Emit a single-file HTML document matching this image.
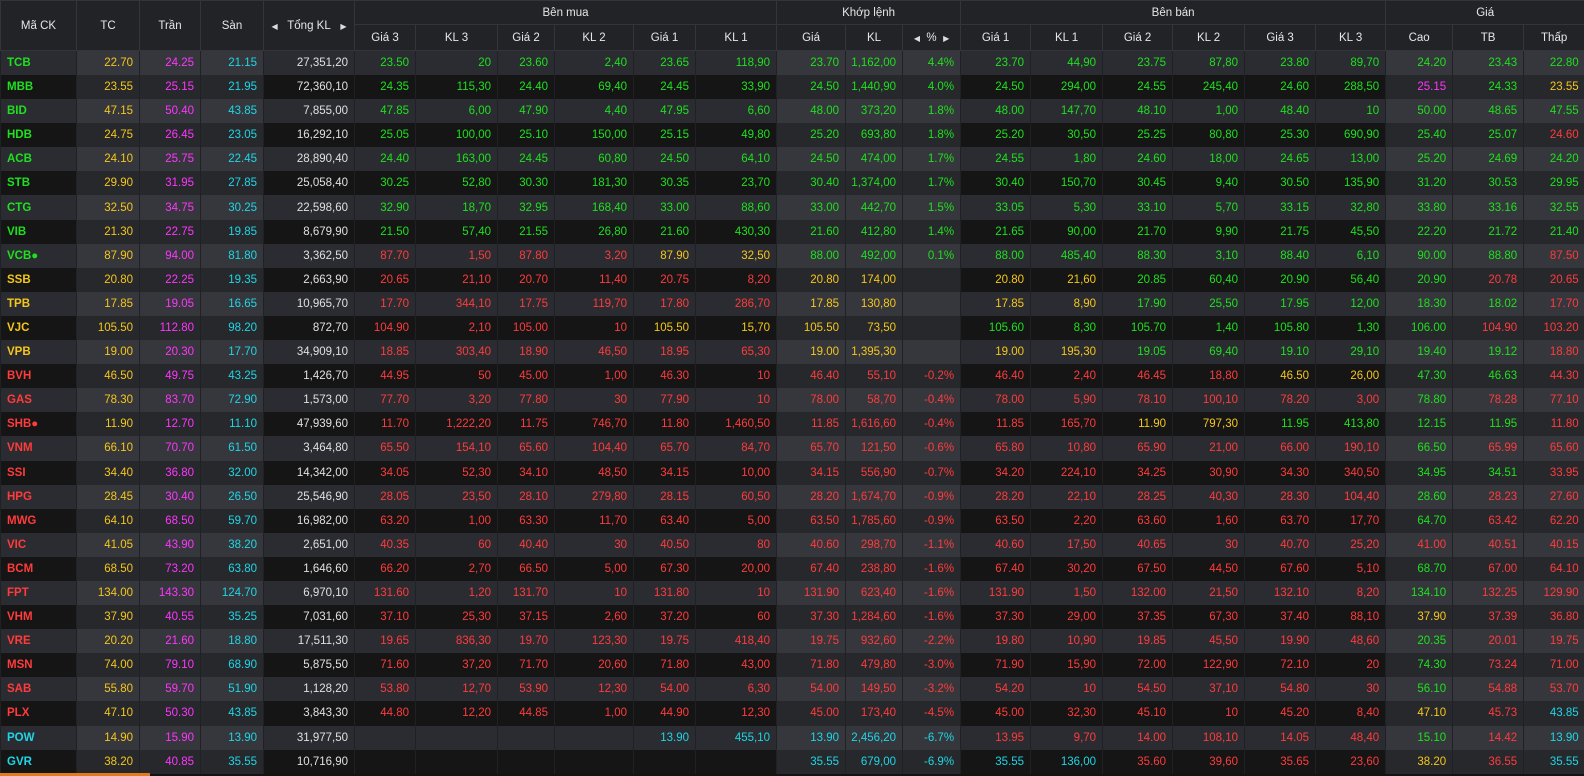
<!DOCTYPE html>
<html><head><meta charset="utf-8"><style>
html,body{margin:0;padding:0;background:#131313;width:1584px;height:776px;overflow:hidden}
table{border-collapse:collapse;table-layout:fixed;width:1584px;font-family:"Liberation Sans","DejaVu Sans",sans-serif;font-size:11.5px}
th{background:#222327;color:#e6e6e6;font-weight:normal;border:1px solid #34353a;font-size:11.5px;padding:0}
thead tr:first-child th{height:23px}
thead tr:nth-child(2) th{height:25px}
tbody tr{height:24.1px}
td{height:24.1px;line-height:24px;padding:0 6px 0 0;text-align:right;border-left:1px solid #202125;white-space:nowrap;overflow:hidden;box-sizing:border-box}
tbody tr:nth-child(odd) td{background:#2b2c31}
tbody tr:nth-child(even) td{background:#151515}
tbody tr:nth-child(odd) td.h{background:#36373c}
tbody tr:nth-child(even) td.h{background:#27282c}
td.t{text-align:left;padding-left:6px;font-weight:bold}
.g{color:#1ee01e}.r{color:#ff3b3b}.y{color:#f5c61c}.p{color:#ff35ff}.c{color:#1ed6e6}.w{color:#e0e0e0}
.ar{font-size:8px;color:#ddd}
#bar{position:absolute;left:0;top:773px;width:150px;height:3px;background:#e07b20}
</style></head><body>
<table id="tb">
<colgroup><col style="width:76px"><col style="width:63px"><col style="width:61px"><col style="width:63px"><col style="width:91px"><col style="width:61px"><col style="width:82px"><col style="width:57px"><col style="width:79px"><col style="width:62px"><col style="width:81px"><col style="width:69px"><col style="width:57px"><col style="width:58px"><col style="width:70px"><col style="width:72px"><col style="width:70px"><col style="width:72px"><col style="width:71px"><col style="width:70px"><col style="width:67px"><col style="width:71px"><col style="width:61px"></colgroup>
<thead>
<tr><th rowspan="2">Mã CK</th><th rowspan="2">TC</th><th rowspan="2">Trần</th><th rowspan="2">Sàn</th><th rowspan="2"><span class="ar">◀</span>&nbsp;&nbsp;&nbsp;Tổng KL&nbsp;&nbsp;&nbsp;<span class="ar">▶</span></th><th colspan="6">Bên mua</th><th colspan="3">Khớp lệnh</th><th colspan="6">Bên bán</th><th colspan="3">Giá</th></tr>
<tr><th>Giá 3</th><th>KL 3</th><th>Giá 2</th><th>KL 2</th><th>Giá 1</th><th>KL 1</th><th>Giá</th><th>KL</th><th><span class="ar">◀</span>&nbsp;&nbsp;%&nbsp;&nbsp;<span class="ar">▶</span></th><th>Giá 1</th><th>KL 1</th><th>Giá 2</th><th>KL 2</th><th>Giá 3</th><th>KL 3</th><th>Cao</th><th>TB</th><th>Thấp</th></tr>
</thead>
<tbody>
<tr><td>TCB</td><td>22.70</td><td>24.25</td><td>21.15</td><td>27,351,20</td><td>23.50</td><td>20</td><td>23.60</td><td>2,40</td><td>23.65</td><td>118,90</td><td>23.70</td><td>1,162,00</td><td>4.4%</td><td>23.70</td><td>44,90</td><td>23.75</td><td>87,80</td><td>23.80</td><td>89,70</td><td>24.20</td><td>23.43</td><td>22.80</td></tr>
<tr><td>MBB</td><td>23.55</td><td>25.15</td><td>21.95</td><td>72,360,10</td><td>24.35</td><td>115,30</td><td>24.40</td><td>69,40</td><td>24.45</td><td>33,90</td><td>24.50</td><td>1,440,90</td><td>4.0%</td><td>24.50</td><td>294,00</td><td>24.55</td><td>245,40</td><td>24.60</td><td>288,50</td><td>25.15</td><td>24.33</td><td>23.55</td></tr>
<tr><td>BID</td><td>47.15</td><td>50.40</td><td>43.85</td><td>7,855,00</td><td>47.85</td><td>6,00</td><td>47.90</td><td>4,40</td><td>47.95</td><td>6,60</td><td>48.00</td><td>373,20</td><td>1.8%</td><td>48.00</td><td>147,70</td><td>48.10</td><td>1,00</td><td>48.40</td><td>10</td><td>50.00</td><td>48.65</td><td>47.55</td></tr>
<tr><td>HDB</td><td>24.75</td><td>26.45</td><td>23.05</td><td>16,292,10</td><td>25.05</td><td>100,00</td><td>25.10</td><td>150,00</td><td>25.15</td><td>49,80</td><td>25.20</td><td>693,80</td><td>1.8%</td><td>25.20</td><td>30,50</td><td>25.25</td><td>80,80</td><td>25.30</td><td>690,90</td><td>25.40</td><td>25.07</td><td>24.60</td></tr>
<tr><td>ACB</td><td>24.10</td><td>25.75</td><td>22.45</td><td>28,890,40</td><td>24.40</td><td>163,00</td><td>24.45</td><td>60,80</td><td>24.50</td><td>64,10</td><td>24.50</td><td>474,00</td><td>1.7%</td><td>24.55</td><td>1,80</td><td>24.60</td><td>18,00</td><td>24.65</td><td>13,00</td><td>25.20</td><td>24.69</td><td>24.20</td></tr>
<tr><td>STB</td><td>29.90</td><td>31.95</td><td>27.85</td><td>25,058,40</td><td>30.25</td><td>52,80</td><td>30.30</td><td>181,30</td><td>30.35</td><td>23,70</td><td>30.40</td><td>1,374,00</td><td>1.7%</td><td>30.40</td><td>150,70</td><td>30.45</td><td>9,40</td><td>30.50</td><td>135,90</td><td>31.20</td><td>30.53</td><td>29.95</td></tr>
<tr><td>CTG</td><td>32.50</td><td>34.75</td><td>30.25</td><td>22,598,60</td><td>32.90</td><td>18,70</td><td>32.95</td><td>168,40</td><td>33.00</td><td>88,60</td><td>33.00</td><td>442,70</td><td>1.5%</td><td>33.05</td><td>5,30</td><td>33.10</td><td>5,70</td><td>33.15</td><td>32,80</td><td>33.80</td><td>33.16</td><td>32.55</td></tr>
<tr><td>VIB</td><td>21.30</td><td>22.75</td><td>19.85</td><td>8,679,90</td><td>21.50</td><td>57,40</td><td>21.55</td><td>26,80</td><td>21.60</td><td>430,30</td><td>21.60</td><td>412,80</td><td>1.4%</td><td>21.65</td><td>90,00</td><td>21.70</td><td>9,90</td><td>21.75</td><td>45,50</td><td>22.20</td><td>21.72</td><td>21.40</td></tr>
<tr><td>VCB●</td><td>87.90</td><td>94.00</td><td>81.80</td><td>3,362,50</td><td>87.70</td><td>1,50</td><td>87.80</td><td>3,20</td><td>87.90</td><td>32,50</td><td>88.00</td><td>492,00</td><td>0.1%</td><td>88.00</td><td>485,40</td><td>88.30</td><td>3,10</td><td>88.40</td><td>6,10</td><td>90.00</td><td>88.80</td><td>87.50</td></tr>
<tr><td>SSB</td><td>20.80</td><td>22.25</td><td>19.35</td><td>2,663,90</td><td>20.65</td><td>21,10</td><td>20.70</td><td>11,40</td><td>20.75</td><td>8,20</td><td>20.80</td><td>174,00</td><td></td><td>20.80</td><td>21,60</td><td>20.85</td><td>60,40</td><td>20.90</td><td>56,40</td><td>20.90</td><td>20.78</td><td>20.65</td></tr>
<tr><td>TPB</td><td>17.85</td><td>19.05</td><td>16.65</td><td>10,965,70</td><td>17.70</td><td>344,10</td><td>17.75</td><td>119,70</td><td>17.80</td><td>286,70</td><td>17.85</td><td>130,80</td><td></td><td>17.85</td><td>8,90</td><td>17.90</td><td>25,50</td><td>17.95</td><td>12,00</td><td>18.30</td><td>18.02</td><td>17.70</td></tr>
<tr><td>VJC</td><td>105.50</td><td>112.80</td><td>98.20</td><td>872,70</td><td>104.90</td><td>2,10</td><td>105.00</td><td>10</td><td>105.50</td><td>15,70</td><td>105.50</td><td>73,50</td><td></td><td>105.60</td><td>8,30</td><td>105.70</td><td>1,40</td><td>105.80</td><td>1,30</td><td>106.00</td><td>104.90</td><td>103.20</td></tr>
<tr><td>VPB</td><td>19.00</td><td>20.30</td><td>17.70</td><td>34,909,10</td><td>18.85</td><td>303,40</td><td>18.90</td><td>46,50</td><td>18.95</td><td>65,30</td><td>19.00</td><td>1,395,30</td><td></td><td>19.00</td><td>195,30</td><td>19.05</td><td>69,40</td><td>19.10</td><td>29,10</td><td>19.40</td><td>19.12</td><td>18.80</td></tr>
<tr><td>BVH</td><td>46.50</td><td>49.75</td><td>43.25</td><td>1,426,70</td><td>44.95</td><td>50</td><td>45.00</td><td>1,00</td><td>46.30</td><td>10</td><td>46.40</td><td>55,10</td><td>-0.2%</td><td>46.40</td><td>2,40</td><td>46.45</td><td>18,80</td><td>46.50</td><td>26,00</td><td>47.30</td><td>46.63</td><td>44.30</td></tr>
<tr><td>GAS</td><td>78.30</td><td>83.70</td><td>72.90</td><td>1,573,00</td><td>77.70</td><td>3,20</td><td>77.80</td><td>30</td><td>77.90</td><td>10</td><td>78.00</td><td>58,70</td><td>-0.4%</td><td>78.00</td><td>5,90</td><td>78.10</td><td>100,10</td><td>78.20</td><td>3,00</td><td>78.80</td><td>78.28</td><td>77.10</td></tr>
<tr><td>SHB●</td><td>11.90</td><td>12.70</td><td>11.10</td><td>47,939,60</td><td>11.70</td><td>1,222,20</td><td>11.75</td><td>746,70</td><td>11.80</td><td>1,460,50</td><td>11.85</td><td>1,616,60</td><td>-0.4%</td><td>11.85</td><td>165,70</td><td>11.90</td><td>797,30</td><td>11.95</td><td>413,80</td><td>12.15</td><td>11.95</td><td>11.80</td></tr>
<tr><td>VNM</td><td>66.10</td><td>70.70</td><td>61.50</td><td>3,464,80</td><td>65.50</td><td>154,10</td><td>65.60</td><td>104,40</td><td>65.70</td><td>84,70</td><td>65.70</td><td>121,50</td><td>-0.6%</td><td>65.80</td><td>10,80</td><td>65.90</td><td>21,00</td><td>66.00</td><td>190,10</td><td>66.50</td><td>65.99</td><td>65.60</td></tr>
<tr><td>SSI</td><td>34.40</td><td>36.80</td><td>32.00</td><td>14,342,00</td><td>34.05</td><td>52,30</td><td>34.10</td><td>48,50</td><td>34.15</td><td>10,00</td><td>34.15</td><td>556,90</td><td>-0.7%</td><td>34.20</td><td>224,10</td><td>34.25</td><td>30,90</td><td>34.30</td><td>340,50</td><td>34.95</td><td>34.51</td><td>33.95</td></tr>
<tr><td>HPG</td><td>28.45</td><td>30.40</td><td>26.50</td><td>25,546,90</td><td>28.05</td><td>23,50</td><td>28.10</td><td>279,80</td><td>28.15</td><td>60,50</td><td>28.20</td><td>1,674,70</td><td>-0.9%</td><td>28.20</td><td>22,10</td><td>28.25</td><td>40,30</td><td>28.30</td><td>104,40</td><td>28.60</td><td>28.23</td><td>27.60</td></tr>
<tr><td>MWG</td><td>64.10</td><td>68.50</td><td>59.70</td><td>16,982,00</td><td>63.20</td><td>1,00</td><td>63.30</td><td>11,70</td><td>63.40</td><td>5,00</td><td>63.50</td><td>1,785,60</td><td>-0.9%</td><td>63.50</td><td>2,20</td><td>63.60</td><td>1,60</td><td>63.70</td><td>17,70</td><td>64.70</td><td>63.42</td><td>62.20</td></tr>
<tr><td>VIC</td><td>41.05</td><td>43.90</td><td>38.20</td><td>2,651,00</td><td>40.35</td><td>60</td><td>40.40</td><td>30</td><td>40.50</td><td>80</td><td>40.60</td><td>298,70</td><td>-1.1%</td><td>40.60</td><td>17,50</td><td>40.65</td><td>30</td><td>40.70</td><td>25,20</td><td>41.00</td><td>40.51</td><td>40.15</td></tr>
<tr><td>BCM</td><td>68.50</td><td>73.20</td><td>63.80</td><td>1,646,60</td><td>66.20</td><td>2,70</td><td>66.50</td><td>5,00</td><td>67.30</td><td>20,00</td><td>67.40</td><td>238,80</td><td>-1.6%</td><td>67.40</td><td>30,20</td><td>67.50</td><td>44,50</td><td>67.60</td><td>5,10</td><td>68.70</td><td>67.00</td><td>64.10</td></tr>
<tr><td>FPT</td><td>134.00</td><td>143.30</td><td>124.70</td><td>6,970,10</td><td>131.60</td><td>1,20</td><td>131.70</td><td>10</td><td>131.80</td><td>10</td><td>131.90</td><td>623,40</td><td>-1.6%</td><td>131.90</td><td>1,50</td><td>132.00</td><td>21,50</td><td>132.10</td><td>8,20</td><td>134.10</td><td>132.25</td><td>129.90</td></tr>
<tr><td>VHM</td><td>37.90</td><td>40.55</td><td>35.25</td><td>7,031,60</td><td>37.10</td><td>25,30</td><td>37.15</td><td>2,60</td><td>37.20</td><td>60</td><td>37.30</td><td>1,284,60</td><td>-1.6%</td><td>37.30</td><td>29,00</td><td>37.35</td><td>67,30</td><td>37.40</td><td>88,10</td><td>37.90</td><td>37.39</td><td>36.80</td></tr>
<tr><td>VRE</td><td>20.20</td><td>21.60</td><td>18.80</td><td>17,511,30</td><td>19.65</td><td>836,30</td><td>19.70</td><td>123,30</td><td>19.75</td><td>418,40</td><td>19.75</td><td>932,60</td><td>-2.2%</td><td>19.80</td><td>10,90</td><td>19.85</td><td>45,50</td><td>19.90</td><td>48,60</td><td>20.35</td><td>20.01</td><td>19.75</td></tr>
<tr><td>MSN</td><td>74.00</td><td>79.10</td><td>68.90</td><td>5,875,50</td><td>71.60</td><td>37,20</td><td>71.70</td><td>20,60</td><td>71.80</td><td>43,00</td><td>71.80</td><td>479,80</td><td>-3.0%</td><td>71.90</td><td>15,90</td><td>72.00</td><td>122,90</td><td>72.10</td><td>20</td><td>74.30</td><td>73.24</td><td>71.00</td></tr>
<tr><td>SAB</td><td>55.80</td><td>59.70</td><td>51.90</td><td>1,128,20</td><td>53.80</td><td>12,70</td><td>53.90</td><td>12,30</td><td>54.00</td><td>6,30</td><td>54.00</td><td>149,50</td><td>-3.2%</td><td>54.20</td><td>10</td><td>54.50</td><td>37,10</td><td>54.80</td><td>30</td><td>56.10</td><td>54.88</td><td>53.70</td></tr>
<tr><td>PLX</td><td>47.10</td><td>50.30</td><td>43.85</td><td>3,843,30</td><td>44.80</td><td>12,20</td><td>44.85</td><td>1,00</td><td>44.90</td><td>12,30</td><td>45.00</td><td>173,40</td><td>-4.5%</td><td>45.00</td><td>32,30</td><td>45.10</td><td>10</td><td>45.20</td><td>8,40</td><td>47.10</td><td>45.73</td><td>43.85</td></tr>
<tr><td>POW</td><td>14.90</td><td>15.90</td><td>13.90</td><td>31,977,50</td><td></td><td></td><td></td><td></td><td>13.90</td><td>455,10</td><td>13.90</td><td>2,456,20</td><td>-6.7%</td><td>13.95</td><td>9,70</td><td>14.00</td><td>108,10</td><td>14.05</td><td>48,40</td><td>15.10</td><td>14.42</td><td>13.90</td></tr>
<tr><td>GVR</td><td>38.20</td><td>40.85</td><td>35.55</td><td>10,716,90</td><td></td><td></td><td></td><td></td><td></td><td></td><td>35.55</td><td>679,00</td><td>-6.9%</td><td>35.55</td><td>136,00</td><td>35.60</td><td>39,60</td><td>35.65</td><td>23,60</td><td>38.20</td><td>36.55</td><td>35.55</td></tr>
</tbody></table>
<div id="bar"></div>
<script>
document.querySelectorAll('#tb tbody tr').forEach(function(tr){
  var td=tr.children;
  var tc=parseFloat(td[1].textContent),ce=parseFloat(td[2].textContent),fl=parseFloat(td[3].textContent);
  function cl(v){if(isNaN(v))return 'w';if(v>=ce)return 'p';if(v<=fl)return 'c';if(v>tc)return 'g';if(v<tc)return 'r';return 'y';}
  td[1].className='h y';td[2].className='h p';td[3].className='h c';td[4].className='w';
  [5,7,9,11,14,16,18].forEach(function(i){var c=cl(parseFloat(td[i].textContent));td[i].className=c;td[i+1].className=c;});
  var kc=cl(parseFloat(td[11].textContent));
  td[0].className='t '+kc;td[13].className=kc;
  [11,12,13].forEach(function(i){td[i].className+=' h';});
  [20,21,22].forEach(function(i){td[i].className='h '+cl(parseFloat(td[i].textContent));});
});
</script>
</body></html>
